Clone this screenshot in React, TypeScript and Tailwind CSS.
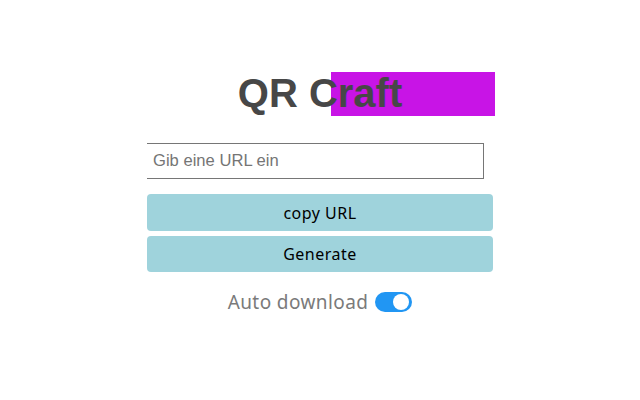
export default function App() {
  return (
    <div className="w-full h-[400px] bg-white flex flex-col items-center pt-[72px]">
      <div className="relative w-[346px] h-[44px] flex items-center justify-center">
        <div className="absolute left-[184px] top-0 w-[164px] h-[44px] bg-[#c814e6]" />
        <h1 className="relative font-['Liberation_Sans',Arial,sans-serif] font-bold text-[40px] leading-none text-[#474747] -translate-y-[1px]">
          QR Craft
        </h1>
      </div>

      <div className="w-[346px] mt-[27px]">
        <input
          type="text"
          placeholder="Gib eine URL ein"
          className="w-[337px] h-[36px] border border-[#767676] border-l-0 bg-white px-[6px] text-[16.6px] font-['Liberation_Sans',Arial,sans-serif] text-[#333] placeholder:text-[#757575] outline-none"
        />
      </div>

      <div className="w-[346px] mt-[15px] flex flex-col gap-[5px]">
        <button className="h-[37px] w-full rounded-[4px] bg-[#9fd3dc] text-black text-[16px] tracking-[0.5px] font-['Noto_Sans',sans-serif]">
          copy URL
        </button>
        <button className="h-[36px] w-full rounded-[4px] bg-[#9fd3dc] text-black text-[16px] tracking-[0.5px] font-['Noto_Sans',sans-serif]">
          Generate
        </button>
      </div>

      <div className="mt-[18px] flex items-center gap-[7px]">
        <span className="text-[19px] leading-[24px] tracking-[0.4px] text-[#7a7a7a] font-['Noto_Sans',sans-serif]">Auto download</span>
        <span className="relative w-[37px] h-[20px] rounded-full bg-[#2196f3]">
          <span className="absolute right-[3px] top-[2px] w-[16px] h-[16px] rounded-full bg-white" />
        </span>
      </div>
    </div>
  );
}
